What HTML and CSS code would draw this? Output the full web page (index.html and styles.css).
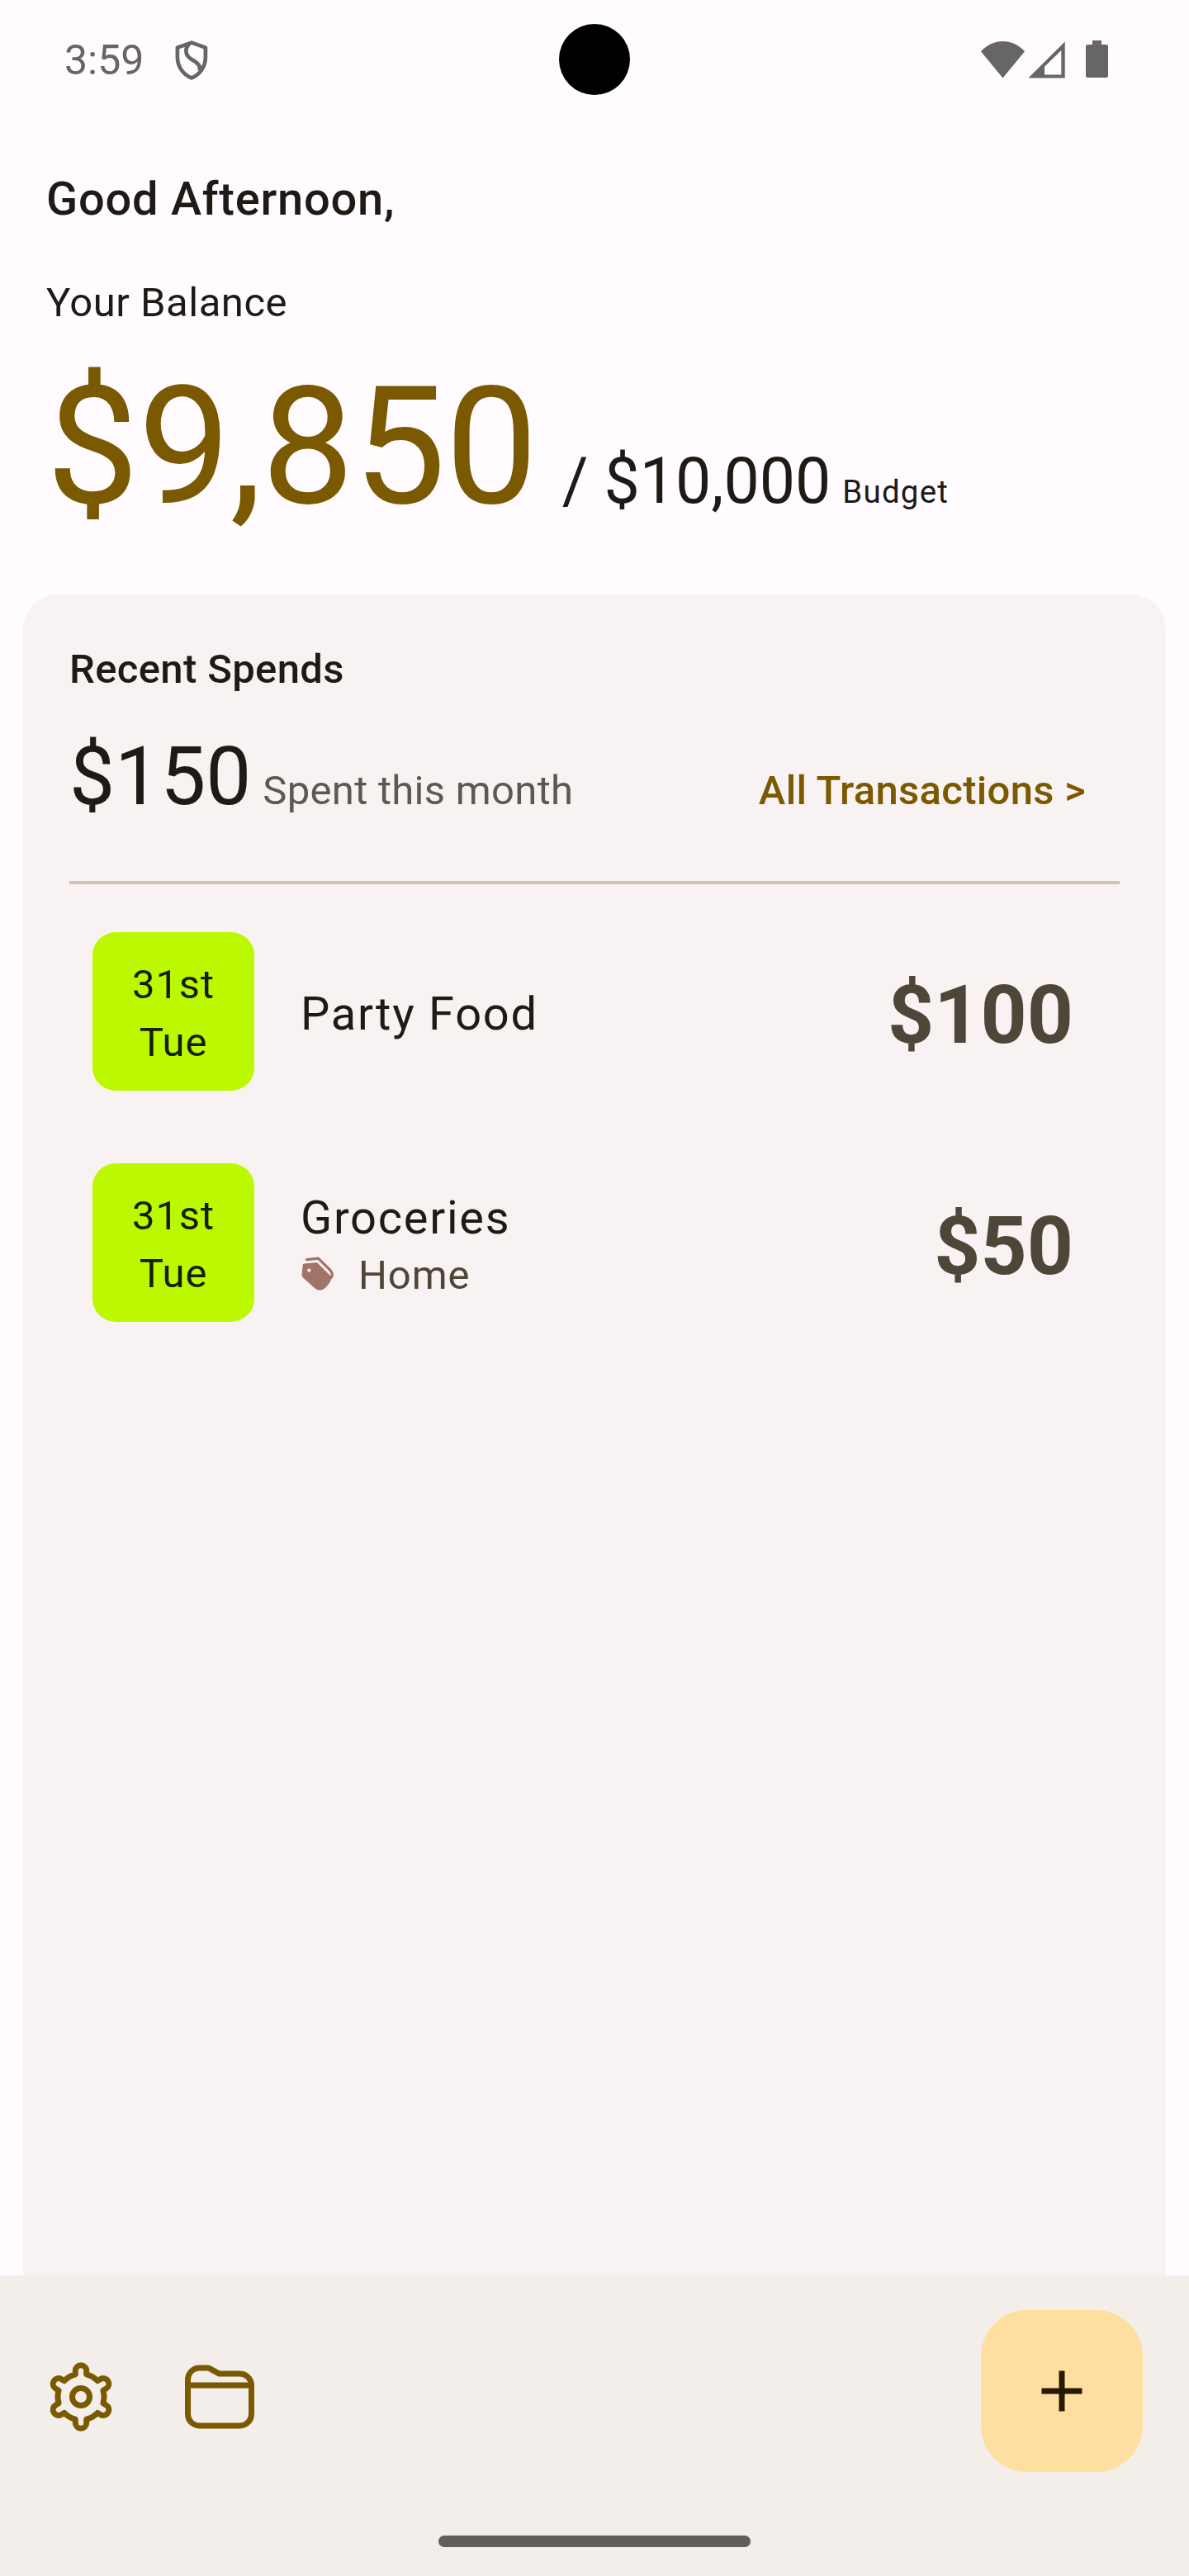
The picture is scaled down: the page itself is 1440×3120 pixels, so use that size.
FILE: index.html
```html
<!DOCTYPE html>
<html lang="en">
<head>
<meta charset="utf-8">
<title>Budget</title>
<link rel="stylesheet" href="styles.css">
</head>
<body>
<div class="screen">
  <header class="status">
    <span class="clock">3:59</span>
    <svg class="shield" viewBox="0 0 40 48" width="40" height="48" fill="none" stroke="#666666" stroke-width="4.7" stroke-linejoin="round"><path d="M20 2.6 L36.9 8.6 V20 C36.9 32 30 41.5 20 45.4 C10 41.5 2.9 32 2.9 20 V8.6 Z"/><path d="M17 4.500 C11.800 9.500 12.200 17 18 21.500 C24 26 31.500 28.500 29.800 36.500"/></svg>
    <svg class="signals" viewBox="0 0 160 48" width="160" height="48" fill="#666666"><path d="M0 13.300 C15 -3 38 -3 53 13.300 L26.500 45.500 Z"/><path fill-rule="evenodd" d="M101.700 1.500 V45.500 H57.500 Z M97.300 12 L77 31.700 V41.500 H97.300 Z"/><path d="M135 0 H146 V5 H152 Q154 5 154 7 V43 Q154 45 152 45 H129 Q127 45 127 43 V7 Q127 5 129 5 H135 Z"/></svg>
    <span class="camera"></span>
  </header>
  <section class="summary">
    <h1 class="greeting">Good Afternoon,</h1>
    <p class="label">Your Balance</p>
    <div class="balance">
      <span class="amount">$9,850</span>
      <span class="budget">/ $10,000</span>
      <span class="caption">Budget</span>
    </div>
  </section>
  <main class="card">
    <h2 class="card-title">Recent Spends</h2>
    <div class="month">
      <span class="spent">$150</span>
      <span class="spent-label">Spent this month</span>
      <a class="all">All Transactions &gt;</a>
    </div>
    <div class="divider"></div>
    <ul class="list">
      <li class="item">
        <div class="date"><span>31st</span><span>Tue</span></div>
        <div class="info"><span class="name">Party Food</span></div>
        <span class="price">$100</span>
      </li>
      <li class="item">
        <div class="date"><span>31st</span><span>Tue</span></div>
        <div class="info tagged">
          <span class="name">Groceries</span>
          <span class="tag"><svg viewBox="0 0 42 42" width="42" height="42"><path fill="#a07468" fill-rule="evenodd" d="M4.500 9.500 L18 8.300 Q20 8.100 21.500 9.500 L36.500 24.500 Q38 27 36.500 30 C34.500 34 32 37.500 28.500 40 Q23 43.500 18 40 L3 26.500 Q1.400 25 1.600 22 L2.600 11.500 Q2.800 9.700 4.500 9.500 Z M10.300 15.600 A2.100 2.100 0 1 0 10.300 19.800 A2.100 2.100 0 1 0 10.300 15.600 Z"/><path d="M7.500 4.600 L21.500 3.200 L36 17.500 Q39.500 21.500 37.500 26" fill="none" stroke="#a07468" stroke-width="3.200" stroke-linecap="round" stroke-linejoin="round"/></svg>Home</span>
        </div>
        <span class="price">$50</span>
      </li>
    </ul>
  </main>
  <footer class="bar">
    <div class="actions">
      <svg viewBox="-42 -42 84 84" width="84" height="84" fill="none" stroke="#7a5900" stroke-width="7" stroke-linejoin="round"><path d="M-6.700 -27.200 V-31.500 A6.700 6.700 0 0 1 6.700 -31.500 V-27.200 A28 28 0 0 1 20.200 -19.400 L23.900 -21.600 A6.700 6.700 0 0 1 30.600 -10 L26.900 -7.800 A28 28 0 0 1 26.900 7.800 L30.600 10 A6.700 6.700 0 0 1 23.900 21.600 L20.200 19.400 A28 28 0 0 1 6.700 27.200 V31.500 A6.700 6.700 0 0 1 -6.700 31.500 V27.200 A28 28 0 0 1 -20.200 19.400 L-23.900 21.600 A6.700 6.700 0 0 1 -30.600 10 L-26.900 7.800 A28 28 0 0 1 -26.900 -7.800 L-30.600 -10 A6.700 6.700 0 0 1 -23.900 -21.600 L-20.200 -19.400 A28 28 0 0 1 -6.700 -27.200 Z"/><circle r="10.500"/></svg>
      <svg viewBox="0 0 84 84" width="84" height="84" fill="none" stroke="#7a5900" stroke-width="7"><path d="M3.500 28 V21 A14 14 0 0 1 17.500 7 H27 Q28.500 7 30 7.700 L41.500 14 H66.500 A14 14 0 0 1 80.500 28 V63 A14 14 0 0 1 66.500 77 H17.500 A14 14 0 0 1 3.500 63 Z M3.500 28 H80.500"/></svg>
    </div>
    <button class="fab"><svg viewBox="0 0 50 50" width="50" height="50" fill="#261a00"><path d="M21.500 .5 H28.500 V21.500 H49.500 V28.500 H28.500 V49.500 H21.500 V28.500 H.5 V21.500 H21.500 Z"/></svg></button>
    <span class="handle"></span>
  </footer>
</div>
</body>
</html>
```
FILE: styles.css
```css
* { box-sizing: border-box; }
body { margin: 0; background: #fffbff; font-family: Roboto, "Liberation Sans", sans-serif; color: #1e1b16; }
h1, h2, p, ul { margin: 0; padding: 0; font-weight: 400; }
.screen { width: 1440px; height: 3120px; display: flex; flex-direction: column; overflow: hidden; white-space: nowrap; }
.status { position: relative; height: 144px; padding: 2px 92px 0 78px; display: flex; align-items: center; color: #666; }
.clock { font-size: 50px; line-height: 56px; }
.shield { margin-left: 38px; }
.signals { margin-left: auto; }
.camera { position: absolute; left: 677px; top: 29px; width: 86px; height: 86px; border-radius: 50%; background: #000; }
.summary { height: 576px; padding: 55px 56px 0; }
.greeting { font-size: 56px; line-height: 84px; font-weight: 500; letter-spacing: .75px; }
.label { margin-top: 49px; font-size: 49px; line-height: 70px; letter-spacing: .5px; }
.balance { display: flex; align-items: baseline; margin-top: 27px; line-height: 224px; }
.amount { font-size: 199.5px; letter-spacing: -.875px; color: #7a5900; }
.budget { margin-left: 30px; font-size: 77px; }
.caption { margin-left: 14px; font-size: 38.500px; letter-spacing: 1.200px; }
.card { height: 2036px; margin: 0 28px; padding: 56px 56px 0; background: #f8f2f2; border-radius: 42px 42px 0 0; }
.card-title { font-size: 49px; line-height: 70px; font-weight: 500; letter-spacing: .35px; }
.month { display: flex; align-items: baseline; margin-top: 32px; line-height: 126px; }
.spent { font-size: 98px; }
.spent-label { margin-left: 14px; font-size: 49px; letter-spacing: .3px; color: #5d5852; }
.all { margin-left: auto; margin-right: 41px; font-size: 49px; font-weight: 500; letter-spacing: .3px; color: #7a5900; }
.divider { height: 4px; margin-top: 46px; background: #d0c5b4; }
.list { list-style: none; margin-top: 58px; padding: 0 56px 0 28px; display: flex; flex-direction: column; gap: 88px; }
.item { height: 192px; display: flex; align-items: center; }
.date { width: 196px; height: 192px; border-radius: 28px; background: #bcf900; color: #161e00; display: flex; flex-direction: column; align-items: center; justify-content: center; padding-top: 5px; font-size: 49px; line-height: 70px; letter-spacing: .875px; }
.info { margin-left: 56px; padding-top: 6px; display: flex; flex-direction: column; }
.info.tagged { padding-top: 10px; }
.name { font-size: 56px; line-height: 70px; letter-spacing: 1.750px; }
.tag { display: flex; align-items: center; gap: 28px; font-size: 49px; line-height: 70px; letter-spacing: .875px; color: #4d4639; }
.tag svg { margin-top: -6px; }
.price { margin-left: auto; padding-top: 10px; font-size: 98px; line-height: 126px; font-weight: 700; color: #4d4639; }
.bar { position: relative; height: 364px; padding: 42px 56px; background: #f3eee9; display: flex; justify-content: space-between; align-items: flex-start; }
.actions { display: flex; gap: 84px; padding-top: 63px; }
.fab { width: 196px; height: 196px; border: 0; padding: 0; border-radius: 56px; background: #ffdf9f; display: flex; align-items: center; justify-content: center; }
.handle { position: absolute; left: 531px; top: 315px; width: 378px; height: 14px; border-radius: 7px; background: #625e5c; }
```
